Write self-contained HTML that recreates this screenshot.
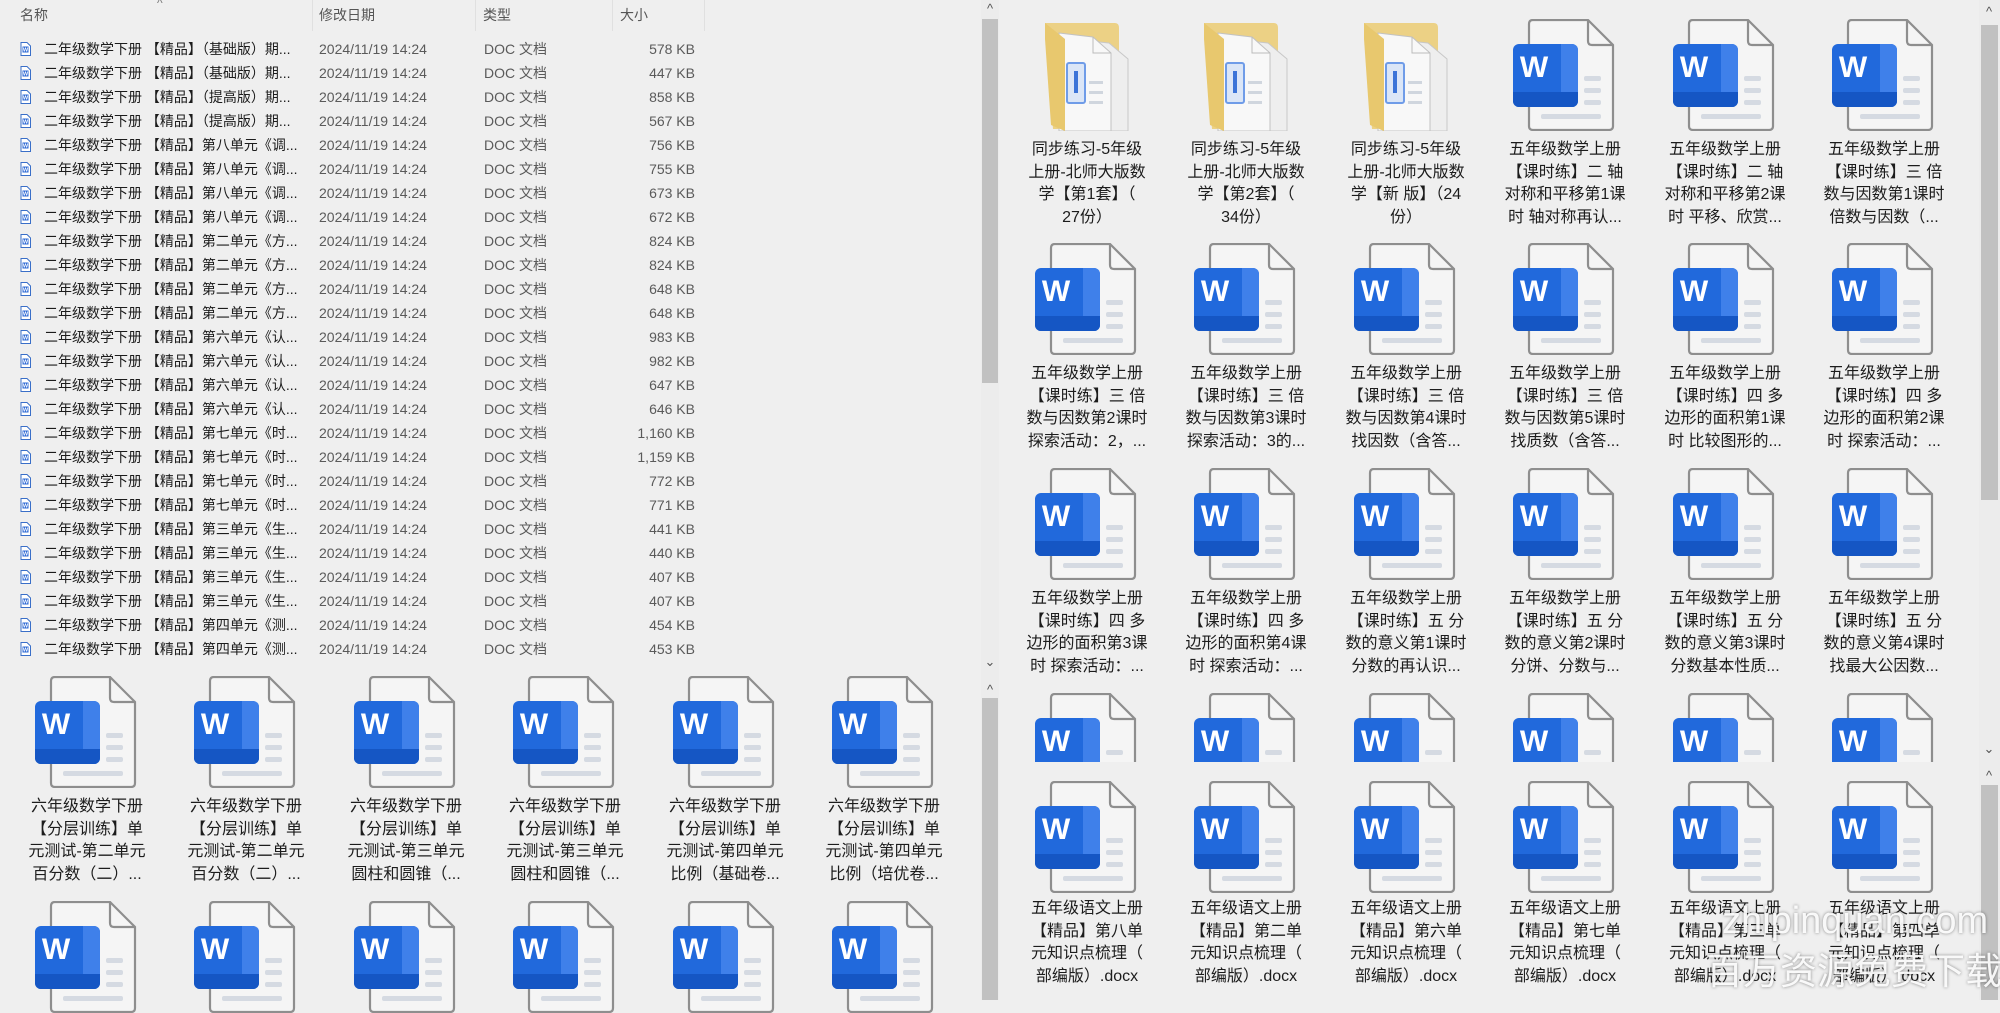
<!DOCTYPE html>
<html><head><meta charset="utf-8">
<style>
*{margin:0;padding:0;box-sizing:border-box}
body{width:2000px;height:1000px;overflow:hidden;background:#efefef;font-family:"Liberation Sans","Noto Sans CJK SC",sans-serif;color:#1c1c1c;position:relative}
.a{position:absolute;white-space:nowrap}
.r{position:absolute;left:0;width:705px;height:24px;line-height:24px;font-size:14px}
.r span{position:absolute;top:0}
.r .n{left:44px}
.r .d{left:319px;color:#5a5a5a}
.r .t{left:484px;color:#5a5a5a}
.r .s{left:600px;width:95px;text-align:right;color:#5a5a5a}
.r svg{position:absolute;left:20px;top:5px}
.h{position:absolute;top:4px;font-size:14px;color:#555;line-height:22px}
.sep{position:absolute;top:0;width:1px;height:31px;background:#e0e0e0}
.ic{position:absolute;width:104px;height:112px}
.lb{position:absolute;width:170px;text-align:center;font-size:16px;line-height:22.7px;white-space:nowrap;color:#1c1c1c}
.sb{position:absolute;background:#c1c1c1}
.ar{position:absolute;font-size:13px;color:#555;width:16px;text-align:center;line-height:12px}
</style></head><body>
<svg width="0" height="0" style="position:absolute">
<defs>
<clipPath id="bc"><rect x="0" y="25" width="65" height="63" rx="6"/></clipPath>
<symbol id="d" viewBox="0 0 104 112">
<path d="M20 1H75L100 26V107Q100 111 96 111H20Q16 111 16 107V5Q16 1 20 1Z" fill="#f5f5f5" stroke="#8e8e8e" stroke-width="2.2"/>
<path d="M75 1V22Q75 26 79 26H100" fill="none" stroke="#8e8e8e" stroke-width="2.2"/>
<rect x="71" y="57" width="17" height="5" rx="2" fill="#d5dae2"/>
<rect x="71" y="69" width="17" height="5" rx="2" fill="#d5dae2"/>
<rect x="71" y="81" width="17" height="5" rx="2" fill="#d5dae2"/>
<rect x="28" y="95" width="60" height="5" rx="2" fill="#d5dae2"/>
<g clip-path="url(#bc)">
<rect x="0" y="25" width="65" height="63" fill="#2169dc"/>
<rect x="48" y="25" width="17" height="63" fill="#3f80ea"/>
<rect x="0" y="73" width="65" height="15" fill="#1556c4"/>
</g>
<text x="21" y="58" text-anchor="middle" font-family="Liberation Sans" font-weight="bold" font-size="30" fill="#fff">W</text>
</symbol>
<symbol id="f" viewBox="0 0 104 112">
<path d="M10 4H80Q84 4 84 9V110H18Z" fill="#ecd185"/>
<path d="M34 20L74 24L93 40V112H34Z" fill="#eeeeee" stroke="#c8c8c8"/>
<path d="M24 14L58 18L76 34V112H24Z" fill="#f8f8f8" stroke="#c2c2c2"/>
<path d="M58 18V34H76" fill="none" stroke="#bbb"/>
<rect x="32" y="44" width="18" height="40" rx="2" fill="#dbe6f7" stroke="#6f9ce8" stroke-width="2"/>
<rect x="39" y="52" width="4" height="22" fill="#3c74d8"/>
<rect x="54" y="62" width="14" height="3" fill="#d0d6de"/><rect x="54" y="72" width="14" height="3" fill="#d0d6de"/><rect x="54" y="82" width="14" height="3" fill="#d0d6de"/>
<path d="M10 4L30 20V112L16 106L10 20Z" fill="#e8c86e"/>
</symbol>
<symbol id="sm" viewBox="0 0 11 14"><path d="M1 .5H7L10.5 4V13.5H1Z" fill="#fff" stroke="#3a6fc8"/><rect x="2.5" y="4.5" width="6" height="6" fill="#2f6bd6"/><text x="5.5" y="9.7" text-anchor="middle" font-size="5.5" fill="#fff" font-family="Liberation Sans" font-weight="bold">W</text></symbol>
</defs></svg>

<div class="h" style="left:20px">名称</div>
<div class="a" style="left:157px;top:-4px;font-size:12px;color:#777">^</div>
<div class="h" style="left:319px">修改日期</div>
<div class="h" style="left:483px">类型</div>
<div class="h" style="left:620px">大小</div>
<div class="sep" style="left:312px"></div><div class="sep" style="left:475px"></div><div class="sep" style="left:612px"></div><div class="sep" style="left:704px"></div>

<div class="r" style="top:37px"><svg width="11" height="14"><use href="#sm"/></svg><span class="n">二年级数学下册 【精品】（基础版）期...</span><span class="d">2024/11/19 14:24</span><span class="t">DOC 文档</span><span class="s">578 KB</span></div>
<div class="r" style="top:61px"><svg width="11" height="14"><use href="#sm"/></svg><span class="n">二年级数学下册 【精品】（基础版）期...</span><span class="d">2024/11/19 14:24</span><span class="t">DOC 文档</span><span class="s">447 KB</span></div>
<div class="r" style="top:85px"><svg width="11" height="14"><use href="#sm"/></svg><span class="n">二年级数学下册 【精品】（提高版）期...</span><span class="d">2024/11/19 14:24</span><span class="t">DOC 文档</span><span class="s">858 KB</span></div>
<div class="r" style="top:109px"><svg width="11" height="14"><use href="#sm"/></svg><span class="n">二年级数学下册 【精品】（提高版）期...</span><span class="d">2024/11/19 14:24</span><span class="t">DOC 文档</span><span class="s">567 KB</span></div>
<div class="r" style="top:133px"><svg width="11" height="14"><use href="#sm"/></svg><span class="n">二年级数学下册 【精品】第八单元《调...</span><span class="d">2024/11/19 14:24</span><span class="t">DOC 文档</span><span class="s">756 KB</span></div>
<div class="r" style="top:157px"><svg width="11" height="14"><use href="#sm"/></svg><span class="n">二年级数学下册 【精品】第八单元《调...</span><span class="d">2024/11/19 14:24</span><span class="t">DOC 文档</span><span class="s">755 KB</span></div>
<div class="r" style="top:181px"><svg width="11" height="14"><use href="#sm"/></svg><span class="n">二年级数学下册 【精品】第八单元《调...</span><span class="d">2024/11/19 14:24</span><span class="t">DOC 文档</span><span class="s">673 KB</span></div>
<div class="r" style="top:205px"><svg width="11" height="14"><use href="#sm"/></svg><span class="n">二年级数学下册 【精品】第八单元《调...</span><span class="d">2024/11/19 14:24</span><span class="t">DOC 文档</span><span class="s">672 KB</span></div>
<div class="r" style="top:229px"><svg width="11" height="14"><use href="#sm"/></svg><span class="n">二年级数学下册 【精品】第二单元《方...</span><span class="d">2024/11/19 14:24</span><span class="t">DOC 文档</span><span class="s">824 KB</span></div>
<div class="r" style="top:253px"><svg width="11" height="14"><use href="#sm"/></svg><span class="n">二年级数学下册 【精品】第二单元《方...</span><span class="d">2024/11/19 14:24</span><span class="t">DOC 文档</span><span class="s">824 KB</span></div>
<div class="r" style="top:277px"><svg width="11" height="14"><use href="#sm"/></svg><span class="n">二年级数学下册 【精品】第二单元《方...</span><span class="d">2024/11/19 14:24</span><span class="t">DOC 文档</span><span class="s">648 KB</span></div>
<div class="r" style="top:301px"><svg width="11" height="14"><use href="#sm"/></svg><span class="n">二年级数学下册 【精品】第二单元《方...</span><span class="d">2024/11/19 14:24</span><span class="t">DOC 文档</span><span class="s">648 KB</span></div>
<div class="r" style="top:325px"><svg width="11" height="14"><use href="#sm"/></svg><span class="n">二年级数学下册 【精品】第六单元《认...</span><span class="d">2024/11/19 14:24</span><span class="t">DOC 文档</span><span class="s">983 KB</span></div>
<div class="r" style="top:349px"><svg width="11" height="14"><use href="#sm"/></svg><span class="n">二年级数学下册 【精品】第六单元《认...</span><span class="d">2024/11/19 14:24</span><span class="t">DOC 文档</span><span class="s">982 KB</span></div>
<div class="r" style="top:373px"><svg width="11" height="14"><use href="#sm"/></svg><span class="n">二年级数学下册 【精品】第六单元《认...</span><span class="d">2024/11/19 14:24</span><span class="t">DOC 文档</span><span class="s">647 KB</span></div>
<div class="r" style="top:397px"><svg width="11" height="14"><use href="#sm"/></svg><span class="n">二年级数学下册 【精品】第六单元《认...</span><span class="d">2024/11/19 14:24</span><span class="t">DOC 文档</span><span class="s">646 KB</span></div>
<div class="r" style="top:421px"><svg width="11" height="14"><use href="#sm"/></svg><span class="n">二年级数学下册 【精品】第七单元《时...</span><span class="d">2024/11/19 14:24</span><span class="t">DOC 文档</span><span class="s">1,160 KB</span></div>
<div class="r" style="top:445px"><svg width="11" height="14"><use href="#sm"/></svg><span class="n">二年级数学下册 【精品】第七单元《时...</span><span class="d">2024/11/19 14:24</span><span class="t">DOC 文档</span><span class="s">1,159 KB</span></div>
<div class="r" style="top:469px"><svg width="11" height="14"><use href="#sm"/></svg><span class="n">二年级数学下册 【精品】第七单元《时...</span><span class="d">2024/11/19 14:24</span><span class="t">DOC 文档</span><span class="s">772 KB</span></div>
<div class="r" style="top:493px"><svg width="11" height="14"><use href="#sm"/></svg><span class="n">二年级数学下册 【精品】第七单元《时...</span><span class="d">2024/11/19 14:24</span><span class="t">DOC 文档</span><span class="s">771 KB</span></div>
<div class="r" style="top:517px"><svg width="11" height="14"><use href="#sm"/></svg><span class="n">二年级数学下册 【精品】第三单元《生...</span><span class="d">2024/11/19 14:24</span><span class="t">DOC 文档</span><span class="s">441 KB</span></div>
<div class="r" style="top:541px"><svg width="11" height="14"><use href="#sm"/></svg><span class="n">二年级数学下册 【精品】第三单元《生...</span><span class="d">2024/11/19 14:24</span><span class="t">DOC 文档</span><span class="s">440 KB</span></div>
<div class="r" style="top:565px"><svg width="11" height="14"><use href="#sm"/></svg><span class="n">二年级数学下册 【精品】第三单元《生...</span><span class="d">2024/11/19 14:24</span><span class="t">DOC 文档</span><span class="s">407 KB</span></div>
<div class="r" style="top:589px"><svg width="11" height="14"><use href="#sm"/></svg><span class="n">二年级数学下册 【精品】第三单元《生...</span><span class="d">2024/11/19 14:24</span><span class="t">DOC 文档</span><span class="s">407 KB</span></div>
<div class="r" style="top:613px"><svg width="11" height="14"><use href="#sm"/></svg><span class="n">二年级数学下册 【精品】第四单元《测...</span><span class="d">2024/11/19 14:24</span><span class="t">DOC 文档</span><span class="s">454 KB</span></div>
<div class="r" style="top:637px"><svg width="11" height="14"><use href="#sm"/></svg><span class="n">二年级数学下册 【精品】第四单元《测...</span><span class="d">2024/11/19 14:24</span><span class="t">DOC 文档</span><span class="s">453 KB</span></div>

<svg class="ic" style="left:35px;top:676px"><use href="#d"/></svg>
<svg class="ic" style="left:194px;top:676px"><use href="#d"/></svg>
<svg class="ic" style="left:354px;top:676px"><use href="#d"/></svg>
<svg class="ic" style="left:513px;top:676px"><use href="#d"/></svg>
<svg class="ic" style="left:673px;top:676px"><use href="#d"/></svg>
<svg class="ic" style="left:832px;top:676px"><use href="#d"/></svg>
<div class="lb" style="left:2px;top:796px">六年级数学下册<br>【分层训练】单<br>元测试-第二单元<br>百分数（二）...</div>
<div class="lb" style="left:161px;top:796px">六年级数学下册<br>【分层训练】单<br>元测试-第二单元<br>百分数（二）...</div>
<div class="lb" style="left:321px;top:796px">六年级数学下册<br>【分层训练】单<br>元测试-第三单元<br>圆柱和圆锥（...</div>
<div class="lb" style="left:480px;top:796px">六年级数学下册<br>【分层训练】单<br>元测试-第三单元<br>圆柱和圆锥（...</div>
<div class="lb" style="left:640px;top:796px">六年级数学下册<br>【分层训练】单<br>元测试-第四单元<br>比例（基础卷...</div>
<div class="lb" style="left:799px;top:796px">六年级数学下册<br>【分层训练】单<br>元测试-第四单元<br>比例（培优卷...</div>
<svg class="ic" style="left:35px;top:901px"><use href="#d"/></svg>
<svg class="ic" style="left:194px;top:901px"><use href="#d"/></svg>
<svg class="ic" style="left:354px;top:901px"><use href="#d"/></svg>
<svg class="ic" style="left:513px;top:901px"><use href="#d"/></svg>
<svg class="ic" style="left:673px;top:901px"><use href="#d"/></svg>
<svg class="ic" style="left:832px;top:901px"><use href="#d"/></svg>

<div class="a" style="left:981px;top:0;width:18px;height:1000px;background:#ececec"></div>
<div class="sb" style="left:982px;top:19px;width:16px;height:364px"></div>
<div class="sb" style="left:982px;top:698px;width:16px;height:302px"></div>
<div class="ar" style="left:982px;top:3px">^</div>
<div class="ar" style="left:982px;top:656px">⌄</div>
<div class="ar" style="left:982px;top:684px">^</div>

<svg class="ic" style="left:1035px;top:19px"><use href="#f"/></svg>
<svg class="ic" style="left:1194px;top:19px"><use href="#f"/></svg>
<svg class="ic" style="left:1354px;top:19px"><use href="#f"/></svg>
<svg class="ic" style="left:1513px;top:19px"><use href="#d"/></svg>
<svg class="ic" style="left:1673px;top:19px"><use href="#d"/></svg>
<svg class="ic" style="left:1832px;top:19px"><use href="#d"/></svg>
<div class="lb" style="left:1002px;top:139px">同步练习-5年级<br>上册-北师大版数<br>学【第1套】（<br>27份）</div>
<div class="lb" style="left:1161px;top:139px">同步练习-5年级<br>上册-北师大版数<br>学【第2套】（<br>34份）</div>
<div class="lb" style="left:1321px;top:139px">同步练习-5年级<br>上册-北师大版数<br>学【新 版】（24<br>份）</div>
<div class="lb" style="left:1480px;top:139px">五年级数学上册<br>【课时练】二 轴<br>对称和平移第1课<br>时 轴对称再认...</div>
<div class="lb" style="left:1640px;top:139px">五年级数学上册<br>【课时练】二 轴<br>对称和平移第2课<br>时 平移、欣赏...</div>
<div class="lb" style="left:1799px;top:139px">五年级数学上册<br>【课时练】三 倍<br>数与因数第1课时<br>倍数与因数（...</div>

<svg class="ic" style="left:1035px;top:243px"><use href="#d"/></svg>
<svg class="ic" style="left:1194px;top:243px"><use href="#d"/></svg>
<svg class="ic" style="left:1354px;top:243px"><use href="#d"/></svg>
<svg class="ic" style="left:1513px;top:243px"><use href="#d"/></svg>
<svg class="ic" style="left:1673px;top:243px"><use href="#d"/></svg>
<svg class="ic" style="left:1832px;top:243px"><use href="#d"/></svg>
<div class="lb" style="left:1002px;top:363px">五年级数学上册<br>【课时练】三 倍<br>数与因数第2课时<br>探索活动：2，...</div>
<div class="lb" style="left:1161px;top:363px">五年级数学上册<br>【课时练】三 倍<br>数与因数第3课时<br>探索活动：3的...</div>
<div class="lb" style="left:1321px;top:363px">五年级数学上册<br>【课时练】三 倍<br>数与因数第4课时<br>找因数（含答...</div>
<div class="lb" style="left:1480px;top:363px">五年级数学上册<br>【课时练】三 倍<br>数与因数第5课时<br>找质数（含答...</div>
<div class="lb" style="left:1640px;top:363px">五年级数学上册<br>【课时练】四 多<br>边形的面积第1课<br>时 比较图形的...</div>
<div class="lb" style="left:1799px;top:363px">五年级数学上册<br>【课时练】四 多<br>边形的面积第2课<br>时 探索活动：...</div>

<svg class="ic" style="left:1035px;top:468px"><use href="#d"/></svg>
<svg class="ic" style="left:1194px;top:468px"><use href="#d"/></svg>
<svg class="ic" style="left:1354px;top:468px"><use href="#d"/></svg>
<svg class="ic" style="left:1513px;top:468px"><use href="#d"/></svg>
<svg class="ic" style="left:1673px;top:468px"><use href="#d"/></svg>
<svg class="ic" style="left:1832px;top:468px"><use href="#d"/></svg>
<div class="lb" style="left:1002px;top:588px">五年级数学上册<br>【课时练】四 多<br>边形的面积第3课<br>时 探索活动：...</div>
<div class="lb" style="left:1161px;top:588px">五年级数学上册<br>【课时练】四 多<br>边形的面积第4课<br>时 探索活动：...</div>
<div class="lb" style="left:1321px;top:588px">五年级数学上册<br>【课时练】五 分<br>数的意义第1课时<br>分数的再认识...</div>
<div class="lb" style="left:1480px;top:588px">五年级数学上册<br>【课时练】五 分<br>数的意义第2课时<br>分饼、分数与...</div>
<div class="lb" style="left:1640px;top:588px">五年级数学上册<br>【课时练】五 分<br>数的意义第3课时<br>分数基本性质...</div>
<div class="lb" style="left:1799px;top:588px">五年级数学上册<br>【课时练】五 分<br>数的意义第4课时<br>找最大公因数...</div>

<div class="a" style="left:1001px;top:693px;width:979px;height:69px;overflow:hidden">
<svg class="ic" style="left:34px;top:0"><use href="#d"/></svg>
<svg class="ic" style="left:193px;top:0"><use href="#d"/></svg>
<svg class="ic" style="left:353px;top:0"><use href="#d"/></svg>
<svg class="ic" style="left:512px;top:0"><use href="#d"/></svg>
<svg class="ic" style="left:672px;top:0"><use href="#d"/></svg>
<svg class="ic" style="left:831px;top:0"><use href="#d"/></svg>
</div>

<svg class="ic" style="left:1035px;top:781px"><use href="#d"/></svg>
<svg class="ic" style="left:1194px;top:781px"><use href="#d"/></svg>
<svg class="ic" style="left:1354px;top:781px"><use href="#d"/></svg>
<svg class="ic" style="left:1513px;top:781px"><use href="#d"/></svg>
<svg class="ic" style="left:1673px;top:781px"><use href="#d"/></svg>
<svg class="ic" style="left:1832px;top:781px"><use href="#d"/></svg>
<div class="lb" style="left:1002px;top:898px">五年级语文上册<br>【精品】第八单<br>元知识点梳理（<br>部编版）.docx</div>
<div class="lb" style="left:1161px;top:898px">五年级语文上册<br>【精品】第二单<br>元知识点梳理（<br>部编版）.docx</div>
<div class="lb" style="left:1321px;top:898px">五年级语文上册<br>【精品】第六单<br>元知识点梳理（<br>部编版）.docx</div>
<div class="lb" style="left:1480px;top:898px">五年级语文上册<br>【精品】第七单<br>元知识点梳理（<br>部编版）.docx</div>
<div class="lb" style="left:1640px;top:898px">五年级语文上册<br>【精品】第三单<br>元知识点梳理（<br>部编版）.docx</div>
<div class="lb" style="left:1799px;top:898px">五年级语文上册<br>【精品】第四单<br>元知识点梳理（<br>部编版）.docx</div>

<div class="a" style="left:1979px;top:0;width:21px;height:1000px;background:#ececec"></div>
<div class="sb" style="left:1981px;top:25px;width:17px;height:475px"></div>
<div class="sb" style="left:1981px;top:785px;width:17px;height:215px"></div>
<div class="ar" style="left:1981px;top:6px">^</div>
<div class="ar" style="left:1981px;top:743px">⌄</div>
<div class="ar" style="left:1981px;top:770px">^</div>

<div class="a" style="left:1722px;top:900px;font-size:38px;color:rgba(255,255,255,.92);text-shadow:0 0 3px rgba(0,0,0,.45);line-height:42px">zhipinquan.com</div>
<div class="a" style="left:1706px;top:950px;font-size:37px;color:rgba(255,255,255,.92);text-shadow:0 0 3px rgba(0,0,0,.45);line-height:44px">百万资源免费下载</div>
</body></html>
